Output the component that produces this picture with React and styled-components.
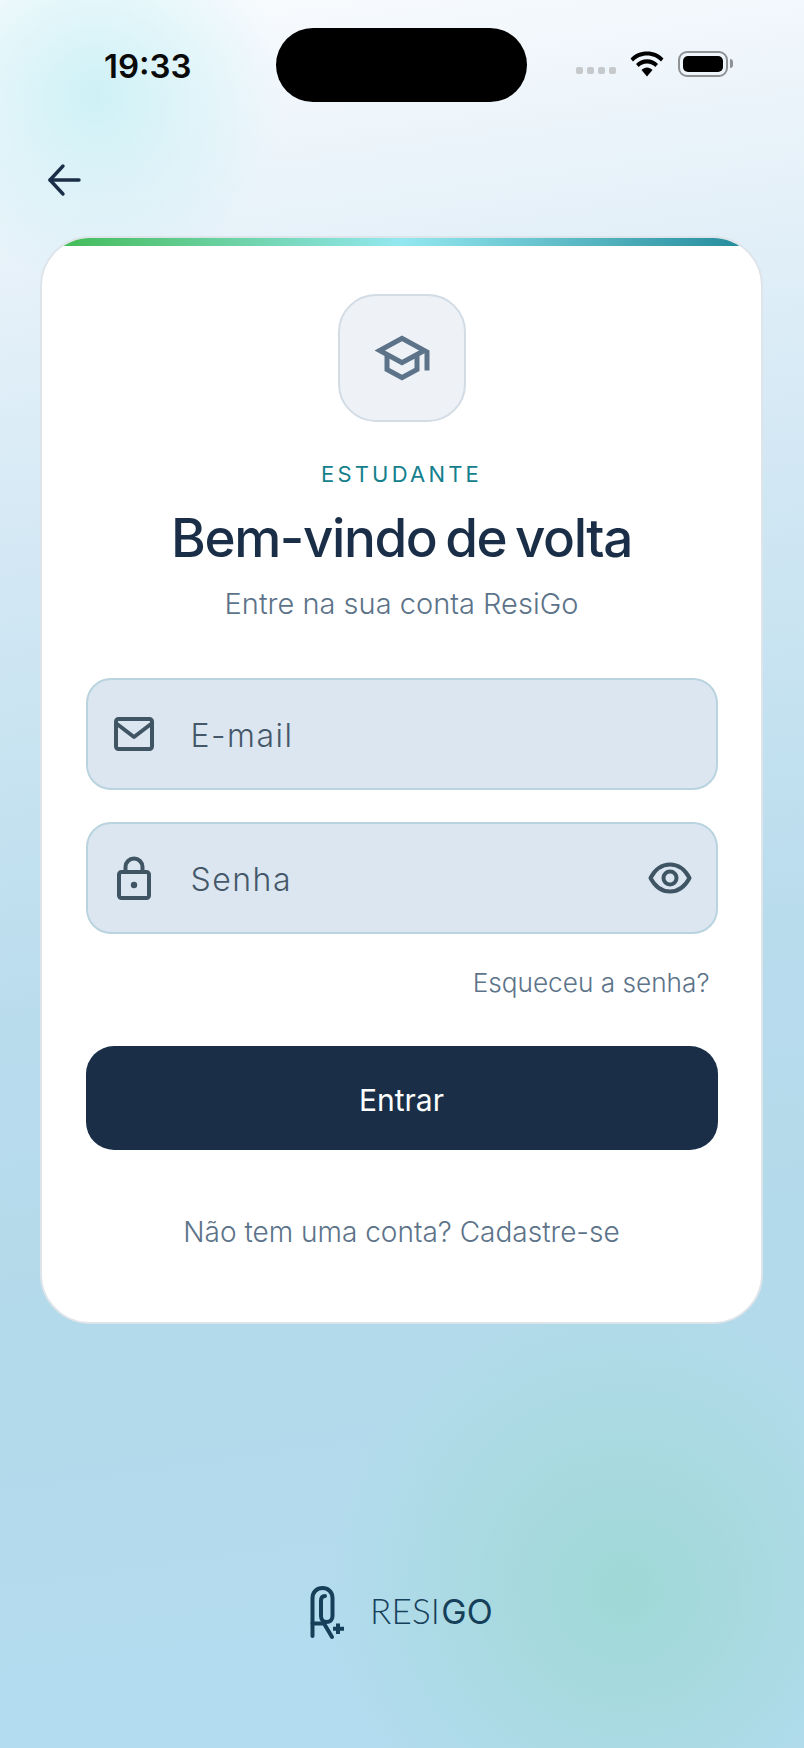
import React from "react";
import styled, { createGlobalStyle } from "styled-components";

const GlobalStyle = createGlobalStyle`
  html, body {
    margin: 0;
    padding: 0;
    background: #b5dcf0;
  }
  * { box-sizing: border-box; }
`;

const Screen = styled.div`
  width: 804px;
  height: 1748px;
  overflow: hidden;
  display: flex;
  flex-direction: column;
  font-family: Inter, "Liberation Sans", sans-serif;
  background:
    radial-gradient(circle 190px at 95px 95px, rgba(200, 240, 245, 0.85), rgba(200, 240, 245, 0) 100%),
    radial-gradient(circle 300px at 625px 1590px, rgba(158, 216, 212, 0.95), rgba(158, 216, 212, 0) 100%),
    linear-gradient(172deg, #fafcfe 0%, #eaf3fa 12%, #d3e8f4 30%, #b9dced 55%, #b3daea 72%, #b4dcf1 100%);
`;

const StatusBar = styled.div`
  height: 101px;
  padding: 28px 0 0 104px;
  display: flex;
  align-items: flex-start;
`;

const Time = styled.div`
  width: 172px;
  margin-top: 19px;
  font-family: Inter, sans-serif;
  font-size: 33px;
  line-height: 38px;
  font-weight: 600;
  color: #0a0a0a;
`;

const Island = styled.div`
  width: 251px;
  height: 74px;
  background: #000;
  border-radius: 37px;
`;

const StatusIcons = styled.div`
  margin-left: 49px;
  margin-top: 23px;
  display: flex;
  align-items: center;
`;

const Dots = styled.div`
  display: flex;
  gap: 4px;
  margin-top: 12px;
  margin-right: 14px;
`;

const Dot = styled.span`
  width: 7px;
  height: 7px;
  border-radius: 2px;
  background: #c6c9cc;
`;

const Battery = styled.div`
  margin-left: 14px;
  width: 50px;
  height: 26px;
  padding: 3px;
  border: 2px solid #8f9295;
  border-radius: 9px;
  position: relative;

  &::before {
    content: "";
    display: block;
    width: 100%;
    height: 100%;
    background: #000;
    border-radius: 5px;
  }

  &::after {
    content: "";
    position: absolute;
    right: -7px;
    top: 6px;
    width: 3px;
    height: 9px;
    background: #8f9295;
    border-radius: 0 3px 3px 0;
  }
`;

const BackRow = styled.div`
  height: 135px;
  padding: 62px 0 0 47px;
`;

const Card = styled.div`
  width: 723px;
  height: 1088px;
  margin-left: 40px;
  background: #fff;
  border: 2px solid #dde4ea;
  border-radius: 50px;
  overflow: hidden;
  display: flex;
  flex-direction: column;
  align-items: center;
`;

const TopBar = styled.div`
  width: 100%;
  height: 8px;
  flex-shrink: 0;
  background: linear-gradient(90deg, #3fb950 0%, #93e8f0 50%, #1f8797 100%);
`;

const RoleIcon = styled.div`
  width: 128px;
  height: 128px;
  margin-top: 48px;
  display: flex;
  align-items: center;
  justify-content: center;
  background: #eef2f7;
  border: 2px solid #d3dce5;
  border-radius: 38px;
  color: #5c7389;
`;

const Role = styled.div`
  margin-top: 37px;
  font-size: 22px;
  line-height: 30px;
  font-weight: 400;
  letter-spacing: 3.2px;
  color: #14808c;
`;

const Title = styled.h1`
  margin: 17px 0 0;
  font-size: 53px;
  line-height: 64px;
  font-weight: 550;
  letter-spacing: -1.4px;
  word-spacing: -4px;
  color: #1a2f47;
`;

const Subtitle = styled.p`
  margin: 14px 0 0;
  font-size: 29px;
  line-height: 40px;
  font-weight: 300;
  color: #5c7389;
`;

const Form = styled.div`
  width: 632px;
  margin-top: 54px;
  display: flex;
  flex-direction: column;
`;

const Field = styled.div`
  height: 112px;
  margin-bottom: ${props => props.$gap || 0}px;
  padding: 0 24px 0 25px;
  display: flex;
  align-items: center;
  background: #dce6f0;
  border: 2px solid #b9d4df;
  border-radius: 25px;
  color: #3f5563;
`;

const FieldIcon = styled.div`
  width: 42px;
  height: 42px;
  flex-shrink: 0;
  display: flex;
  align-items: center;
  justify-content: center;
`;

const Placeholder = styled.span`
  flex: 1;
  margin-left: 36px;
  padding-top: 3px;
  font-size: 32px;
  font-weight: 300;
  letter-spacing: 1.5px;
  color: #44586a;
`;

const Forgot = styled.div`
  margin-top: 31px;
  padding-right: 8px;
  text-align: right;
  font-size: 26.2px;
  line-height: 36px;
  font-weight: 300;
  color: #5c7389;
`;

const Submit = styled.button`
  height: 104px;
  margin-top: 45px;
  padding: 3px 0 0;
  border: 0;
  border-radius: 28px;
  background: #1a2f47;
  color: #fff;
  font-family: inherit;
  font-size: 30px;
  font-weight: 400;
`;

const SignUp = styled.div`
  margin-top: 64px;
  text-align: center;
  font-size: 28px;
  line-height: 36px;
  font-weight: 300;
  color: #5c7389;
`;

const Brand = styled.div`
  margin-top: 262px;
  padding-left: 310px;
  display: flex;
  align-items: center;
  gap: 24px;
  color: #16405a;
`;

const BrandName = styled.div`
  font-family: Lato, sans-serif;
  font-size: 35px;
  line-height: 40px;
  font-weight: 300;
  margin-top: -4px;
  letter-spacing: 0.2px;

  b {
    font-family: Inter, sans-serif;
    font-size: 34px;
    font-weight: 400;
    margin-left: 1px;
  }
`;

const BackArrow = () => (
  <svg width="34" height="34" viewBox="0 0 34 34" fill="none" stroke="#1a2f47" strokeWidth="3.4" strokeLinecap="round" strokeLinejoin="round">
    <path d="M32 17H3" />
    <path d="M16 3L3 17l13 14" />
  </svg>
);

const CapIcon = () => (
  <svg width="60" height="60" viewBox="0 0 24 24" fill="currentColor">
    <path d="M12 3L1 9l4 2.18v6L12 21l7-3.82v-6l2-1.09V17h2V9L12 3zm6.82 6L12 12.72 5.18 9 12 5.28 18.82 9zM17 15.99l-5 2.73-5-2.73v-3.72L12 15l5-2.73v3.72z" />
  </svg>
);

const MailIcon = () => (
  <svg width="42" height="36" viewBox="0 0 42 36" fill="none" stroke="currentColor" strokeWidth="4" strokeLinejoin="round">
    <rect x="3" y="3" width="36" height="30" rx="2.5" />
    <path d="M4 8l17 13L38 8" />
  </svg>
);

const LockIcon = () => (
  <svg width="36" height="44" viewBox="0 0 36 44" fill="none" stroke="currentColor" strokeWidth="4" strokeLinejoin="round">
    <rect x="3" y="16" width="30" height="26" rx="2.5" />
    <path d="M9.5 16V11a8.5 8.5 0 0 1 17 0v5" />
    <circle cx="18" cy="29" r="3.2" fill="currentColor" stroke="none" />
  </svg>
);

const EyeIcon = () => (
  <svg width="44" height="32" viewBox="0 0 44 32" fill="none" stroke="currentColor" strokeWidth="4" strokeLinejoin="round">
    <path d="M2.5 16C7 7.500 14 2.500 22 2.500S37 7.500 41.500 16C37 24.500 30 29.500 22 29.500S7 24.500 2.500 16z" />
    <circle cx="22" cy="16" r="6.500" />
  </svg>
);

const WifiIcon = () => (
  <svg width="34" height="26" viewBox="0 0 34 26" fill="#000">
    <path d="M0.500 7.500C4.500 3 10.500 0.500 17 0.500S29.500 3 33.500 7.500L31 10.500C27.500 6.700 22.500 4.500 17 4.500S6.500 6.700 3 10.500z" />
    <path d="M6 13C8.800 10 12.700 8.200 17 8.200S25.200 10 28 13L25.300 16C23.200 13.800 20.300 12.400 17 12.400S10.800 13.800 8.700 16z" />
    <path d="M11.500 19C13 17.500 15 16.500 17 16.500S21 17.500 22.500 19L17 25.500z" />
  </svg>
);

const BrandMark = () => (
  <svg width="36" height="54" viewBox="0 0 36 54" fill="none" stroke="#16405a" strokeWidth="4" strokeLinecap="round" strokeLinejoin="round">
    <path d="M2.500 50V12C2.500 6 7 2 12.500 2S22.500 6 22.500 12V30C22.500 34 20 36 16.500 36S11 33.500 11 30V15C11 11.500 12.500 10 15 10" />
    <path d="M2.500 37.500H14L22 51" />
    <path d="M28 37.500V48M23 42.800H34" strokeLinecap="butt" />
  </svg>
);

const App = () => {
  return (
    <>
      <GlobalStyle />
      <Screen>
        <StatusBar>
          <Time>19:33</Time>
          <Island />
          <StatusIcons>
            <Dots>
              <Dot />
              <Dot />
              <Dot />
              <Dot />
            </Dots>
            <WifiIcon />
            <Battery />
          </StatusIcons>
        </StatusBar>
        <BackRow>
          <BackArrow />
        </BackRow>
        <Card>
          <TopBar />
          <RoleIcon>
            <CapIcon />
          </RoleIcon>
          <Role>ESTUDANTE</Role>
          <Title>Bem-vindo de volta</Title>
          <Subtitle>Entre na sua conta ResiGo</Subtitle>
          <Form>
            <Field $gap={32}>
              <FieldIcon>
                <MailIcon />
              </FieldIcon>
              <Placeholder>E-mail</Placeholder>
            </Field>
            <Field>
              <FieldIcon>
                <LockIcon />
              </FieldIcon>
              <Placeholder>Senha</Placeholder>
              <EyeIcon />
            </Field>
            <Forgot>Esqueceu a senha?</Forgot>
            <Submit>Entrar</Submit>
            <SignUp>Não tem uma conta? Cadastre-se</SignUp>
          </Form>
        </Card>
        <Brand>
          <BrandMark />
          <BrandName>
            RESI<b>GO</b>
          </BrandName>
        </Brand>
      </Screen>
    </>
  );
};

export default App;
